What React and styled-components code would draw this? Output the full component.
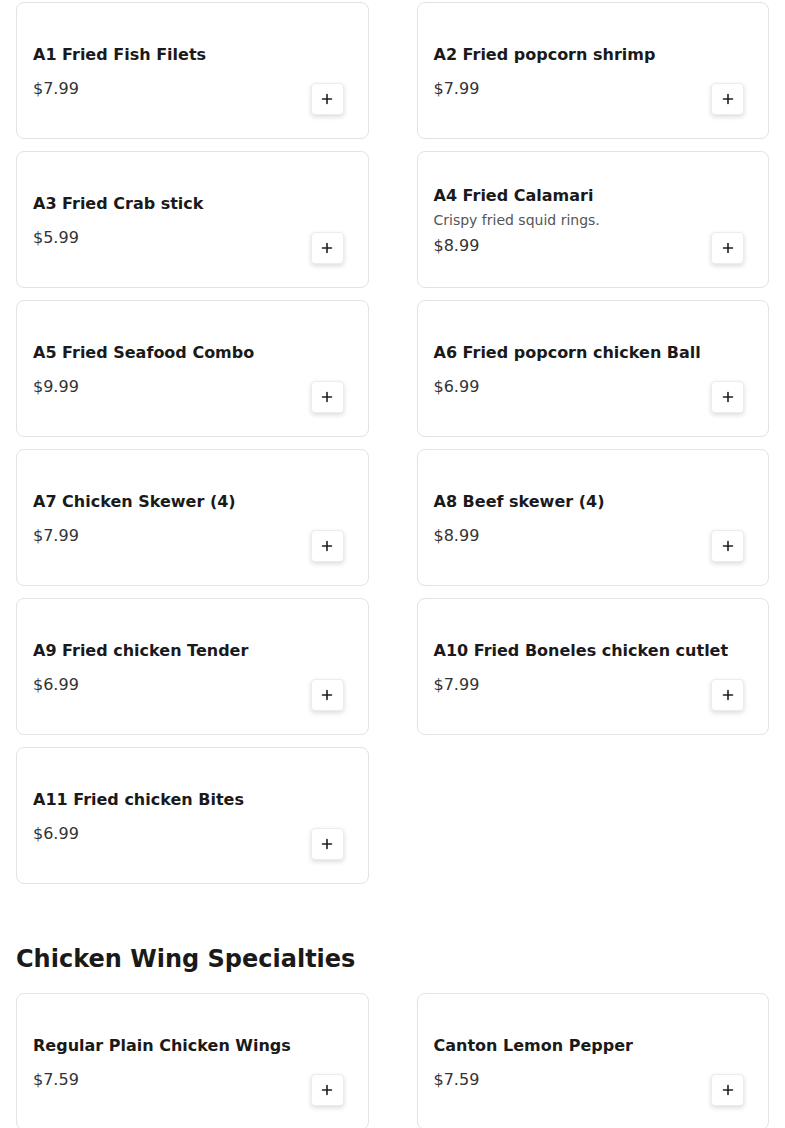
import styled, { createGlobalStyle } from 'styled-components';

const GlobalStyle = createGlobalStyle`
    body {
        margin: 0;
        background: #fff;
        font-family: "DejaVu Sans", "Noto Sans", sans-serif;
        color: #1a1a1a;
    }
`;

const appetizers = [
    { name: "A1 Fried Fish Filets", price: "$7.99" },
    { name: "A2 Fried popcorn shrimp", price: "$7.99" },
    { name: "A3 Fried Crab stick", price: "$5.99" },
    { name: "A4 Fried Calamari", desc: "Crispy fried squid rings.", price: "$8.99" },
    { name: "A5 Fried Seafood Combo", price: "$9.99" },
    { name: "A6 Fried popcorn chicken Ball", price: "$6.99" },
    { name: "A7 Chicken Skewer (4)", price: "$7.99" },
    { name: "A8 Beef skewer (4)", price: "$8.99" },
    { name: "A9 Fried chicken Tender", price: "$6.99" },
    { name: "A10 Fried Boneles chicken cutlet", price: "$7.99" },
    { name: "A11 Fried chicken Bites", price: "$6.99" },
];

const wings = [
    { name: "Regular Plain Chicken Wings", price: "$7.59" },
    { name: "Canton Lemon Pepper", price: "$7.59" },
];

function PlusIcon() {
    return (
        <svg width="12" height="12" viewBox="0 0 12 12" fill="none">
            <path d="M6 1.5v9M1.5 6h9" stroke="#1f1f1f" strokeWidth="1.6" strokeLinecap="round" />
        </svg>
    );
}

function ItemCard({ item }) {
    return (
        <Card>
            <Info>
                <Title>{item.name}</Title>
                {item.desc && <Desc>{item.desc}</Desc>}
                <Price>{item.price}</Price>
            </Info>
            <AddButton aria-label="Add">
                <PlusIcon />
            </AddButton>
        </Card>
    );
}

function App() {
    return (
        <Page>
            <GlobalStyle />
            <Grid>
                {appetizers.map((item) => (
                    <ItemCard key={item.name} item={item} />
                ))}
            </Grid>

            <Section>
                <Heading>Chicken Wing Specialties</Heading>
                <Grid>
                    {wings.map((item) => (
                        <ItemCard key={item.name} item={item} />
                    ))}
                </Grid>
            </Section>
        </Page>
    );
}

const Page = styled.div`
    padding: 2px 16px 40px;
`;

const Grid = styled.div`
    display: grid;
    grid-template-columns: 1fr 1fr;
    column-gap: 48px;
    row-gap: 12px;
`;

const Section = styled.section`
    margin-top: 57px;
`;

const Heading = styled.h2`
    margin: 0 0 16px;
    font-size: 24px;
    font-weight: bold;
    line-height: 36px;
    color: #1a1a1a;
`;

/* info and button share one grid cell: text centred, button at bottom right */
const Card = styled.div`
    box-sizing: border-box;
    height: 137px;
    border: 1px solid #e3e3e3;
    border-radius: 8px;
    background: #fff;
    padding: 2px 24px 0 16px;
    display: grid;
    grid-template-areas: "cell";
`;

const Info = styled.div`
    grid-area: cell;
    align-self: center;
    display: flex;
    flex-direction: column;
`;

const Title = styled.div`
    font-size: 16px;
    font-weight: bold;
    line-height: 24px;
    color: #1a1a1a;
    margin-bottom: 10px;
    white-space: nowrap;
`;

const Desc = styled.div`
    font-size: 14px;
    line-height: 20px;
    color: #555;
    margin-top: -8px;
    margin-bottom: 4px;
`;

const Price = styled.div`
    font-size: 16px;
    line-height: 24px;
    color: #333;
`;

const AddButton = styled.button`
    grid-area: cell;
    justify-self: end;
    align-self: end;
    margin-bottom: 23px;
    width: 33px;
    height: 32px;
    padding: 0;
    display: flex;
    align-items: center;
    justify-content: center;
    background: #fff;
    border: 1px solid #ececec;
    border-radius: 4px;
    box-shadow: 0 2px 5px rgba(0, 0, 0, 0.14);
    cursor: pointer;
`;

export default App;
